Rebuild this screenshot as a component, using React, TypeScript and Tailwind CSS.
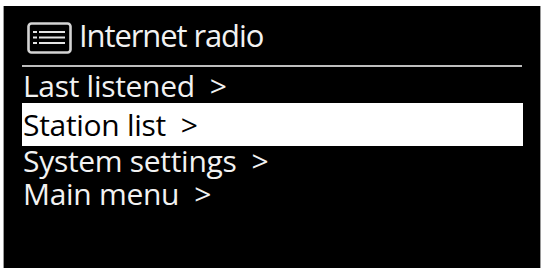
import React from 'react';

const items = [
  { label: 'Last listened', rowClass: 'h-[36px] pt-[2px] leading-[34px]' },
  { label: 'Station list', rowClass: 'h-[43px] leading-[43px]', selected: true },
  { label: 'System settings', rowClass: 'h-[30px] leading-[30px]' },
  { label: 'Main menu', rowClass: 'h-[35px] leading-[35px]' },
];

function ListIcon() {
  return (
    <svg width="45" height="32" viewBox="0 0 45 32" fill="none" className="shrink-0">
      <rect x="1.5" y="1.5" width="42" height="29" rx="3" stroke="#d4d4d4" strokeWidth="2.6" />
      {[10, 15.5, 21].map((y) => (
        <g key={y} stroke="#e5e5e5" strokeWidth="2">
          <line x1="6" y1={y} x2="10" y2={y} />
          <line x1="12" y1={y} x2="38" y2={y} />
        </g>
      ))}
    </svg>
  );
}

export default function App() {
  return (
    <div className="w-[543px] h-[268px] bg-white pt-[6px] pl-[3px] overflow-hidden">
      <div
        className="w-[538px] h-[262px] bg-black border-l border-r border-[#9a9a9a] text-[#f2f2f2]"
        style={{ fontFamily: '"Open Sans", "Noto Sans", sans-serif' }}
      >
        <div className="h-[59px] pt-[12px] pl-[23px] flex items-start">
          <div className="mt-[4px]">
            <ListIcon />
          </div>
          <span className="ml-[7px] text-[31px] leading-[34px] tracking-[-1.1px]">Internet radio</span>
        </div>
        <div className="ml-[18px] w-[500px] h-[2px] bg-[#bdbdbd]" />
        <div className="ml-[18px] w-[501px]">
          {items.map((item) => (
            <div
              key={item.label}
              className={`${item.rowClass} pl-[1px] text-[30px] tracking-[-0.3px] whitespace-nowrap ${
                item.selected ? 'bg-white text-black' : ''
              }`}
            >
              {item.label}
              {'\u00a0 >'}
            </div>
          ))}
        </div>
      </div>
    </div>
  );
}
